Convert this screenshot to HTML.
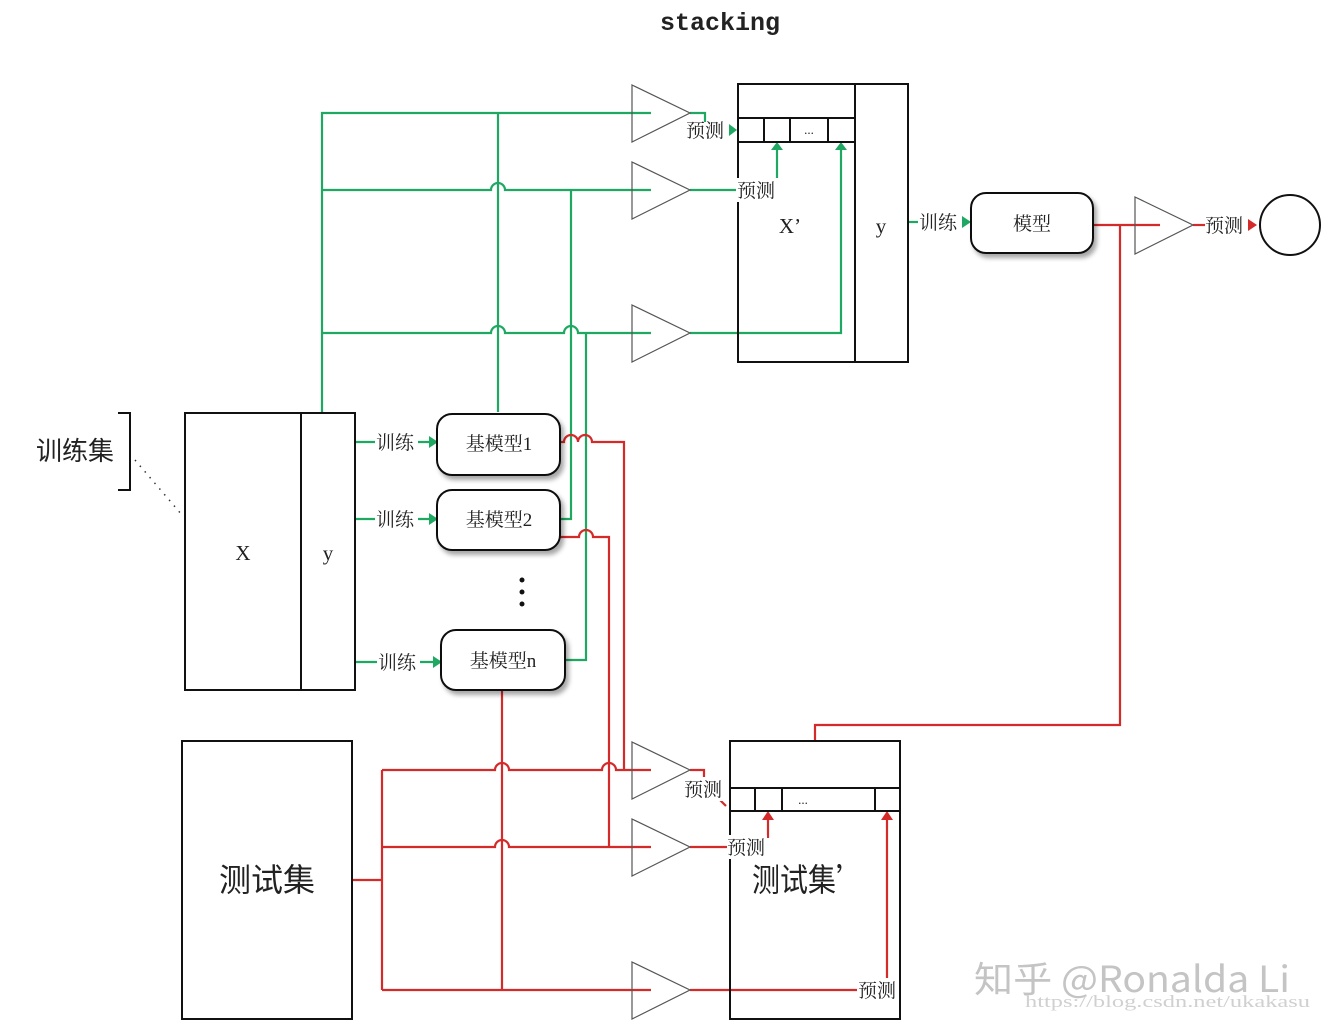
<!DOCTYPE html>
<html><head><meta charset="utf-8"><style>
html,body{margin:0;padding:0;background:#fff;}
svg{display:block;}
text{font-family:"Liberation Serif","Noto Serif CJK SC","Noto Sans CJK SC",serif;fill:#222;}
</style></head><body>
<svg width="1325" height="1032" viewBox="0 0 1325 1032" xmlns="http://www.w3.org/2000/svg">
<defs>
<filter id="sh" x="-20%" y="-20%" width="150%" height="160%"><feDropShadow dx="3" dy="4" stdDeviation="2.5" flood-color="#000" flood-opacity="0.35"/></filter>
</defs>
<text x="720" y="30" text-anchor="middle" style="font-family:'Liberation Mono',monospace;font-weight:bold;font-size:25px">stacking</text>

<!-- green lines -->
<g stroke="#1fa862" stroke-width="2.2" fill="none">
<path d="M322 412 V113 H651"/>
<path d="M498 412 V113"/>
<path d="M322 190 H491 a7 7 0 0 1 14 0 H651"/>
<path d="M322 333 H491 a7 7 0 0 1 14 0 H564 a7 7 0 0 1 14 0 H651"/>
<path d="M571 190 V519 H560"/>
<path d="M586 333 V660 H565"/>
<path d="M690 113 H705 V122"/>
<path d="M690 190 H737"/>
<path d="M777 178 V150"/>
<path d="M690 333 H841 V150"/>
<path d="M355 442 H375 M418 442 H430"/>
<path d="M355 519 H375 M418 519 H430"/>
<path d="M355 662 H377 M420 662 H434"/>
<path d="M908 222 H918"/>
</g>
<g fill="#1fa862">
<path d="M729 124 L737 130 L729 136Z"/>
<path d="M771 150 L777 142 L783 150Z"/>
<path d="M835 150 L841 142 L847 150Z"/>
<path d="M429 436 L438 442 L429 448Z"/>
<path d="M429 513 L438 519 L429 525Z"/>
<path d="M433 656 L442 662 L433 668Z"/>
<path d="M962 216 L971 222 L962 228Z"/>
</g>

<!-- red lines -->
<g stroke="#d42a2a" stroke-width="2.2" fill="none">
<path d="M560 442 H564 a7 7 0 0 1 14 0 a7 7 0 0 1 14 0 H624 V770"/>
<path d="M560 537 H579 a7 7 0 0 1 14 0 H609 V847"/>
<path d="M502 690 V990"/>
<path d="M352 880 H382"/>
<path d="M382 770 V990"/>
<path d="M382 770 H495 a7 7 0 0 1 14 0 H602 a7 7 0 0 1 14 0 H651"/>
<path d="M382 847 H495 a7 7 0 0 1 14 0 H651"/>
<path d="M382 990 H651"/>
<path d="M690 770 H704 V778"/>
<path d="M690 847 H727"/>
<path d="M768 838 V820"/>
<path d="M690 990 H858"/>
<path d="M887 978 V820"/>
<path d="M1093 225 H1160"/>
<path d="M1120 225 V725 H815 V741"/>
<path d="M1193 225 H1205"/>
<path d="M720 800 L726 806"/>
</g>
<g fill="#d42a2a">
<path d="M762 820 L768 811 L774 820Z"/>
<path d="M881 820 L887 811 L893 820Z"/>
<path d="M1248 219 L1257 225 L1248 231Z"/>
</g>

<!-- triangles -->
<g stroke="#555" stroke-width="1.2" fill="none">
<path d="M632 85 L690 113 L632 142Z"/>
<path d="M632 162 L690 190 L632 219Z"/>
<path d="M632 305 L690 333 L632 362Z"/>
<path d="M1135 197 L1193 225 L1135 254Z"/>
<path d="M632 742 L690 770 L632 799Z"/>
<path d="M632 819 L690 847 L632 876Z"/>
<path d="M632 962 L690 990 L632 1019Z"/>
</g>

<!-- boxes -->
<g stroke="#111" stroke-width="2" fill="none">
<rect x="185" y="413" width="170" height="277"/>
<line x1="301" y1="413" x2="301" y2="690"/>
<rect x="182" y="741" width="170" height="278"/>
<rect x="738" y="84" width="170" height="278"/>
<line x1="855" y1="84" x2="855" y2="362"/>
<rect x="738" y="118" width="117" height="24"/>
<line x1="764" y1="118" x2="764" y2="142"/>
<line x1="790" y1="118" x2="790" y2="142"/>
<line x1="828" y1="118" x2="828" y2="142"/>
<rect x="730" y="741" width="170" height="278"/>
<rect x="730" y="788" width="170" height="23"/>
<line x1="755" y1="788" x2="755" y2="811"/>
<line x1="782" y1="788" x2="782" y2="811"/>
<line x1="875" y1="788" x2="875" y2="811"/>
<path d="M118 413 H130 V490 H118"/>
<circle cx="1290" cy="225" r="30"/>
</g>
<line x1="135" y1="460" x2="182" y2="515" stroke="#333" stroke-width="1.5" stroke-dasharray="1.5 6"/>
<g stroke="#111" stroke-width="2" fill="#fff" filter="url(#sh)">
<rect x="437" y="414" width="123" height="61" rx="15"/>
<rect x="437" y="490" width="123" height="60" rx="15"/>
<rect x="441" y="630" width="124" height="60" rx="15"/>
<rect x="971" y="193" width="122" height="60" rx="15"/>
</g>
<g fill="#111"><circle cx="522" cy="580" r="2.5"/><circle cx="522" cy="592" r="2.5"/><circle cx="522" cy="604" r="2.5"/></g>

<!-- label backgrounds -->
<g fill="#fff">
<rect x="736" y="178" width="40" height="24"/>
<rect x="727" y="835" width="40" height="24"/>
<rect x="857" y="978" width="41" height="24"/>
<rect x="684" y="777" width="40" height="24"/>
</g>

<!-- text -->
<g font-size="19">
<text x="499" y="450" text-anchor="middle">基模型1</text>
<text x="499" y="526" text-anchor="middle">基模型2</text>
<text x="503" y="667" text-anchor="middle">基模型n</text>
<text x="1032" y="230" text-anchor="middle">模型</text>
<text x="376" y="449">训练</text>
<text x="376" y="526">训练</text>
<text x="378" y="669">训练</text>
<text x="919" y="229">训练</text>
<text x="686" y="137">预测</text>
<text x="737" y="197">预测</text>
<text x="1205" y="232">预测</text>
<text x="684" y="796">预测</text>
<text x="727" y="854">预测</text>
<text x="858" y="997">预测</text>
</g>
<text x="809" y="134" font-size="13" text-anchor="middle">...</text>
<text x="803" y="804" font-size="13" text-anchor="middle">...</text>
<text x="243" y="560" font-size="21" text-anchor="middle">X</text>
<text x="328" y="560" font-size="21" text-anchor="middle">y</text>
<text x="790" y="233" font-size="21" text-anchor="middle">X’</text>
<text x="881" y="233" font-size="21" text-anchor="middle">y</text>
<text x="75" y="460" font-size="26" text-anchor="middle" style="font-family:'Noto Sans CJK SC',sans-serif">训练集</text>
<text x="267" y="891" font-size="32" text-anchor="middle" style="font-family:'Noto Sans CJK SC',sans-serif">测试集</text>
<text x="752" y="891" font-size="32" textLength="112" lengthAdjust="spacingAndGlyphs" style="font-family:'Noto Sans CJK SC',sans-serif">测试集’</text>

<text x="974" y="992" font-size="36" textLength="316" lengthAdjust="spacingAndGlyphs" style="font-family:'Noto Sans CJK SC',sans-serif;fill:#c4c4c4">知乎 @Ronalda Li</text>
<text x="1025" y="1007" font-size="17" textLength="285" lengthAdjust="spacingAndGlyphs" style="font-family:'Liberation Serif',serif;fill:#d0d0d0">https://blog.csdn.net/ukakasu</text>
</svg>
</body></html>
